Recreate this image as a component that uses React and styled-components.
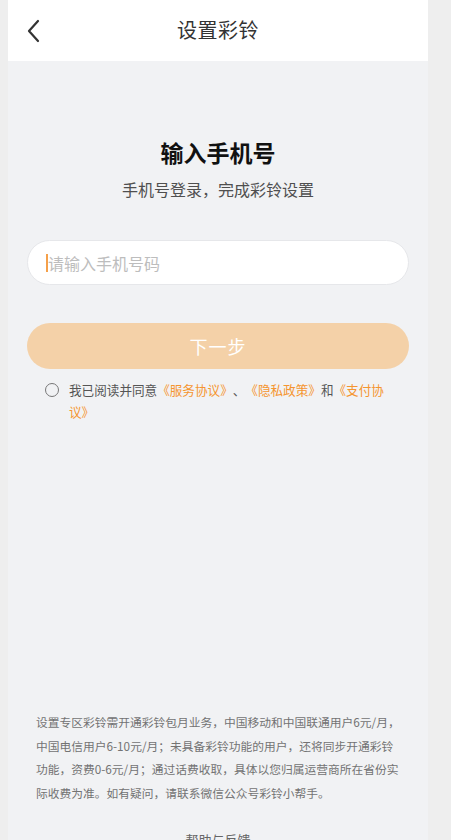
import styled, { createGlobalStyle } from "styled-components";

const GlobalStyle = createGlobalStyle`
  html, body {
    margin: 0;
    padding: 0;
    background: #eeeeee;
  }
  body {
    font-family: "Noto Sans CJK SC", "Noto Sans", sans-serif;
    text-spacing-trim: space-all;
  }
`;

const Page = styled.div`
  width: 420px;
  margin-left: 8px;
  background: #f1f2f4;
  min-height: 900px;
`;

/* ── HEADER ── */
const Header = styled.header`
  height: 61px;
  background: #ffffff;
  display: grid;
  grid-template-columns: 1fr auto 1fr;
  align-items: center;
  padding: 0 19px;
  box-sizing: border-box;
`;

const BackButton = styled.button`
  justify-self: start;
  border: none;
  background: none;
  padding: 0;
  display: flex;
  align-items: center;
  cursor: pointer;
`;

const HeaderTitle = styled.h1`
  margin: 0 0 2px;
  font-size: 20px;
  font-weight: 400;
  color: #333333;
  line-height: 28px;
  letter-spacing: 0.5px;
`;

/* ── MAIN ── */
const Main = styled.main`
  padding: 0 19px;
  display: flex;
  flex-direction: column;
`;

const Title = styled.h2`
  margin: 75px 0 0;
  text-align: center;
  font-size: 23px;
  line-height: 32px;
  font-weight: 700;
  color: #111111;
`;

const Subtitle = styled.p`
  margin: 9px 0 0;
  text-align: center;
  font-size: 16px;
  line-height: 24px;
  color: #4f4f4f;
`;

const PhoneInput = styled.div`
  margin-top: 39px;
  height: 45px;
  box-sizing: border-box;
  border: 1px solid #e6e7ea;
  border-radius: 23px;
  background: #ffffff;
  display: flex;
  align-items: center;
  padding-left: 18px;
  font-size: 16px;
  color: #bdbdbd;
`;

const Caret = styled.span`
  width: 2px;
  height: 18px;
  background: #f5a04a;
`;

const NextButton = styled.button`
  margin-top: 38px;
  height: 46px;
  border: none;
  border-radius: 23px;
  background: #f4d1a8;
  color: #ffffff;
  font-family: inherit;
  font-size: 18px;
  letter-spacing: 1px;
`;

const Agreement = styled.div`
  margin-top: 10px;
  display: flex;
  align-items: flex-start;
  padding-left: 18px;
  gap: 10px;
`;

const Radio = styled.span`
  flex: none;
  width: 14px;
  height: 14px;
  margin-top: 4px;
  border: 1.5px solid #777777;
  border-radius: 50%;
  box-sizing: border-box;
`;

const AgreeText = styled.p`
  margin: 0;
  width: 322px;
  font-size: 12.6px;
  line-height: 22px;
  color: #555555;
  word-break: break-all;
  text-spacing-trim: space-all;
`;

const Link = styled.span`
  color: #f5952f;
`;

/* ── FOOTER ── */
const Notice = styled.p`
  margin: 287px 0 0;
  padding: 0 26px 0 28px;
  font-size: 11.75px;
  line-height: 23.6px;
  color: #737373;
`;

const Help = styled.div`
  margin-top: 26px;
  text-align: center;
  font-size: 13px;
  line-height: 20px;
  color: #666666;
`;

const App = () => {
  return (
    <>
      <GlobalStyle />
      <Page>
        <Header>
          <BackButton aria-label="返回">
            <svg width="14" height="24" viewBox="0 0 14 24">
              <path
                d="M11 2 L2 12 L11 22"
                fill="none"
                stroke="#333"
                strokeWidth="2.2"
                strokeLinecap="round"
                strokeLinejoin="round"
              />
            </svg>
          </BackButton>
          <HeaderTitle>设置彩铃</HeaderTitle>
          <span />
        </Header>

        <Main>
          <Title>输入手机号</Title>
          <Subtitle>手机号登录，完成彩铃设置</Subtitle>

          <PhoneInput>
            <Caret />
            请输入手机号码
          </PhoneInput>

          <NextButton>下一步</NextButton>

          <Agreement>
            <Radio />
            <AgreeText>
              我已阅读并同意<Link>《服务协议》</Link>、<Link>《隐私政策》</Link>和<Link>《支付协议》</Link>
            </AgreeText>
          </Agreement>
        </Main>

        <Notice>
          设置专区彩铃需开通彩铃包月业务，中国移动和中国联通用户6元/月，中国电信用户6-10元/月；未具备彩铃功能的用户，还将同步开通彩铃功能，资费0-6元/月；通过话费收取，具体以您归属运营商所在省份实际收费为准。如有疑问，请联系微信公众号彩铃小帮手。
        </Notice>
        <Help>帮助与反馈</Help>
      </Page>
    </>
  );
};

export default App;
